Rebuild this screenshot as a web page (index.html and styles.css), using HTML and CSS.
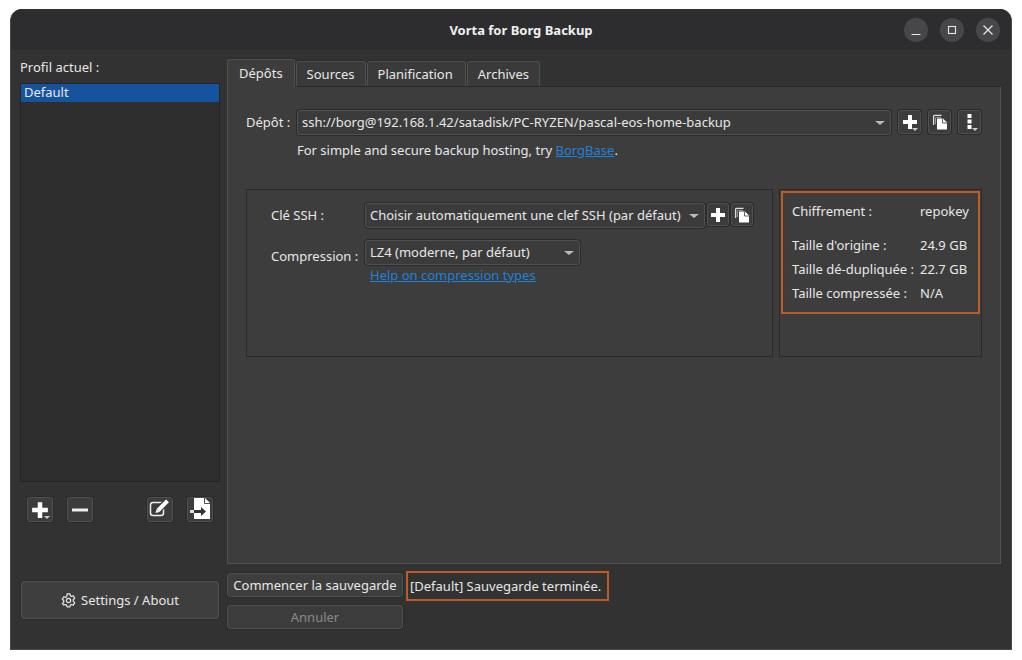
FILE: index.html
```html
<!DOCTYPE html>
<html lang="fr">
<head>
    <meta charset="UTF-8">
    <title>Vorta for Borg Backup</title>
    <link rel="stylesheet" href="styles.css">
</head>
<body>
    <svg class="defs" width="0" height="0">
        <symbol id="plus" viewBox="0 0 16 16"><path d="M6 1h4v5h5v4h-5v5H6v-5H1V6h5z" fill="#fff"/></symbol>
        <symbol id="copy" viewBox="0 0 16 16">
            <path d="M1.600 11V2.200c0-.5.300-.8.800-.8H9.500" fill="none" stroke="#ddd" stroke-width="1.300"/>
            <path d="M3.500 10V4.200c0-.5.300-.8.800-.8H9" fill="none" stroke="#999" stroke-width="1"/>
            <path d="M5 4.500h6l4 4V15.500H5z" fill="#fff"/>
            <path d="M10.500 4.500v4.500H15" fill="none" stroke="#3c3c3c" stroke-width=".8"/>
        </symbol>
    </svg>
    <div class="window">
        <div class="titlebar">
            <span class="title">Vorta for Borg Backup</span>
            <div class="win-btns">
                <span class="win-btn"><svg width="12" height="12" viewBox="0 0 12 12"><path d="M1.500 10.500h9" stroke="#e8e8e8" stroke-width="1.200"/></svg></span>
                <span class="win-btn"><svg width="12" height="12" viewBox="0 0 12 12"><rect x="2.500" y="2.500" width="7" height="7" fill="none" stroke="#e8e8e8" stroke-width="1.100"/></svg></span>
                <span class="win-btn"><svg width="12" height="12" viewBox="0 0 12 12"><path d="M1.500 1.500l9 9M10.500 1.500l-9 9" stroke="#e8e8e8" stroke-width="1.200"/></svg></span>
            </div>
        </div>
        <div class="content">
            <div class="sidebar">
                <div class="profile-label">Profil actuel :</div>
                <div class="profile-list"><div class="profile-item">Default</div></div>
                <div class="profile-tools">
                    <div class="tool-group">
                        <button class="tool menu"><svg width="18" height="18"><use href="#plus"/></svg></button>
                        <button class="tool"><svg width="16" height="16" viewBox="0 0 16 16"><path d="M0 6.500h16v3H0z" fill="#eee"/></svg></button>
                    </div>
                    <div class="tool-group">
                        <button class="tool"><svg width="24" height="23" viewBox="0 0 24 23">
                            <path d="M15.500 10.500V15c0 1.400-1 2.500-2.500 2.500H5c-1.400 0-2.500-1.100-2.500-2.500V7C2.500 5.600 3.600 4.500 5 4.500h9" fill="none" stroke="#eee" stroke-width="1.500"/>
                            <path d="M9.500 13 19 3" fill="none" stroke="#3a3a3a" stroke-width="6.500"/>
                            <path d="M10 12.500 19.500 2.800" fill="none" stroke="#fff" stroke-width="4"/>
                            <path d="M8.600 11.200 11.400 14 7.500 15z" fill="#fff"/>
                        </svg></button>
                        <button class="tool"><svg width="24" height="23" viewBox="0 0 24 23">
                            <path d="M6 0h11l5 5v16H6z" fill="#fff"/>
                            <path d="M16.500 0v5.500H22" fill="none" stroke="#3a3a3a" stroke-width=".9"/>
                            <path d="M2 12h4v3H2z" fill="#ddd"/>
                            <path d="M6 12h7V9l5 4.500L13 18v-3H6z" fill="#333"/>
                        </svg></button>
                    </div>
                </div>
                <button class="btn settings-btn">
                    <svg width="15" height="15" viewBox="0 0 16 16"><path d="M6.500 1h3l.5 2 1.100.6 2-.6 1.500 2.600-1.500 1.400v1.900l1.500 1.400-1.500 2.600-2-.6-1.100.6-.5 2h-3l-.5-2-1.100-.6-2 .6L1.400 11.300l1.500-1.400V8L1.400 6.600 2.900 4l2 .6L6 4z" fill="none" stroke="#e8e8e8" stroke-width="1.300" stroke-linejoin="round"/><circle cx="8" cy="8" r="2.300" fill="none" stroke="#e8e8e8" stroke-width="1.300"/></svg>
                    Settings / About
                </button>
            </div>
            <div class="main">
                <div class="tabs">
                    <span class="tab active">Dépôts</span>
                    <span class="tab">Sources</span>
                    <span class="tab wide">Planification</span>
                    <span class="tab">Archives</span>
                </div>
                <div class="pane">
                    <div class="repo-row">
                        <span class="repo-label">Dépôt :</span>
                        <div class="combo repo-combo">ssh://borg@192.168.1.42/satadisk/PC-RYZEN/pascal-eos-home-backup<i class="arrow"></i></div>
                        <div class="repo-tools">
                            <button class="tool small menu"><svg width="16" height="16"><use href="#plus"/></svg></button>
                            <button class="tool small"><svg width="16" height="16"><use href="#copy"/></svg></button>
                            <button class="tool small menu"><svg width="16" height="16" viewBox="0 0 16 16"><path d="M5.500 0h4v4h-4zM5.500 5.500h4v4h-4zM5.500 11h4v4h-4z" fill="#fff"/></svg></button>
                        </div>
                    </div>
                    <p class="hosting">For simple and secure backup hosting, try <a href="#">BorgBase</a>.</p>
                    <div class="boxes">
                        <div class="box options">
                            <div class="ssh-row">
                                <span class="opt-label">Clé SSH :</span>
                                <div class="combo ssh-combo">Choisir automatiquement une clef SSH (par défaut)<i class="arrow"></i></div>
                                <button class="tool tiny"><svg width="16" height="16"><use href="#plus"/></svg></button>
                                <button class="tool tiny"><svg width="16" height="16"><use href="#copy"/></svg></button>
                            </div>
                            <div class="comp-row">
                                <span class="opt-label comp-label">Compression :</span>
                                <div>
                                    <div class="combo comp-combo">LZ4 (moderne, par défaut)<i class="arrow"></i></div>
                                    <a class="comp-help" href="#">Help on compression types</a>
                                </div>
                            </div>
                        </div>
                        <div class="box stats-box">
                            <div class="stats">
                                <div class="stat first"><span>Chiffrement :</span><span>repokey</span></div>
                                <div class="stat"><span>Taille d'origine :</span><span>24.9 GB</span></div>
                                <div class="stat"><span>Taille dé-dupliquée :</span><span>22.7 GB</span></div>
                                <div class="stat"><span>Taille compressée :</span><span>N/A</span></div>
                            </div>
                        </div>
                    </div>
                </div>
                <div class="actions">
                    <div class="action-btns">
                        <button class="btn">Commencer la sauvegarde</button>
                        <button class="btn disabled">Annuler</button>
                    </div>
                    <div class="status">[Default] Sauvegarde terminée.</div>
                </div>
            </div>
        </div>
    </div>
</body>
</html>
```

FILE: styles.css
```css
* {
    box-sizing: border-box;
}
body {
    margin: 0;
    padding: 9px 10px 10px;
    background: #fff;
    font-family: "Noto Sans", sans-serif;
    font-size: 13px;
    color: #e8e8e8;
    overflow: hidden;
}
.defs {
    display: block;
    height: 0;
}
button {
    font-family: inherit;
    font-size: 13px;
    color: #e8e8e8;
}
a {
    color: #1d82d8;
}
.window {
    width: 1002px;
    height: 641px;
    background: #323232;
    border-radius: 12px 12px 0 0;
    border: 1px solid #4a4a4a;
    border-top: 0;
    overflow: hidden;
}
.titlebar {
    height: 41px;
    background: #2d2d30;
    position: relative;
    display: flex;
    align-items: center;
    justify-content: center;
    padding-left: 20px;
}
.title {
    font-weight: 700;
    color: #f0f0f0;
}
.win-btns {
    position: absolute;
    right: 11px;
    top: 9px;
    display: flex;
    gap: 12px;
}
.win-btn {
    width: 24px;
    height: 24px;
    border-radius: 50%;
    background: #47474a;
    display: flex;
    align-items: center;
    justify-content: center;
}
.content {
    display: flex;
    padding: 9px 10px 0 9px;
    gap: 7px;
}
.sidebar {
    width: 200px;
    flex-shrink: 0;
}
.profile-label {
    height: 24px;
    line-height: 17px;
}
.profile-list {
    height: 399px;
    background: #2e2e2e;
    border: 1px solid #242424;
}
.profile-item {
    height: 18px;
    line-height: 17px;
    background: #15539e;
    padding-left: 3px;
}
.profile-tools {
    display: flex;
    justify-content: space-between;
    padding: 15px 7px 0 7px;
}
.tool-group {
    display: flex;
    gap: 14px;
}
.tool {
    width: 26px;
    height: 25px;
    padding: 0;
    position: relative;
    display: flex;
    align-items: center;
    justify-content: center;
    background: #3c3c3c;
    border: 1px solid #505050;
    border-radius: 3px;
    box-shadow: 0 0 0 1px #2b2b2b;
}
.tool.menu::after {
    content: "";
    position: absolute;
    right: 2px;
    bottom: 2px;
    border: 3px solid transparent;
    border-top: 3px solid #ccc;
    border-bottom: 0;
}
.tool.small {
    width: 23px;
    height: 24px;
}
.tool.tiny {
    width: 22px;
    height: 23px;
}
.settings-btn {
    display: flex;
    align-items: center;
    justify-content: center;
    gap: 5px;
    margin: 59px 0 0 1px;
}
.main {
    width: 774px;
}
.tabs {
    display: flex;
    height: 27px;
    align-items: flex-end;
}
.tab {
    height: 25px;
    line-height: 24px;
    padding: 0 10px;
    margin-right: 1px;
    background: #3a3a3a;
    border: 1px solid #505050;
    border-bottom: 0;
    border-radius: 3px 3px 0 0;
    box-shadow: 0 -1px 0 #2b2b2b;
}
.tab.wide {
    padding-right: 12px;
}
.tab.active {
    height: 28px;
    line-height: 26px;
    padding: 0 11px;
    margin-bottom: -1px;
    position: relative;
    z-index: 1;
    background: #3d3d3d;
}
.pane {
    height: 478px;
    background: #3d3d3d;
    border: 1px solid #505050;
    border-top-color: #2a2a2a;
    padding: 23px 18px 0 18px;
}
.repo-row {
    display: flex;
    align-items: flex-start;
    height: 25px;
}
.repo-label {
    width: 51px;
    line-height: 25px;
}
.combo {
    position: relative;
    height: 25px;
    line-height: 23px;
    padding-left: 4px;
    background: #3b3b3b;
    border: 1px solid #505050;
    border-radius: 3px;
    box-shadow: 0 0 0 1px #2b2b2b;
    white-space: nowrap;
}
.arrow {
    position: absolute;
    right: 5px;
    top: 10px;
    border: 5px solid transparent;
    border-top: 4px solid #bbb;
    border-bottom: 0;
}
.repo-combo {
    width: 594px;
}
.repo-tools {
    display: flex;
    gap: 7px;
    margin-left: 7px;
}
.hosting {
    margin: 6px 0 0 51px;
    line-height: 18px;
}
.boxes {
    display: flex;
    gap: 6px;
    margin-top: 30px;
}
.box {
    height: 168px;
    border: 1px solid #2a2a2a;
    flex-shrink: 0;
}
.options {
    width: 527px;
    padding: 13px 0 0 24px;
}
.ssh-row {
    display: flex;
    align-items: flex-start;
    gap: 2px;
}
.opt-label {
    width: 90px;
    margin-right: 2px;
    flex-shrink: 0;
    line-height: 25px;
}
.ssh-combo {
    width: 340px;
    flex-shrink: 0;
}
.comp-row {
    display: flex;
    margin-top: 12px;
}
.comp-row .opt-label {
    width: 92px;
    padding-top: 4px;
}
.comp-combo {
    width: 215px;
}
.comp-help {
    display: block;
    margin: 1px 0 0 5px;
    line-height: 18px;
}
.stats-box {
    width: 203px;
    padding: 1px;
}
.stats {
    height: 123px;
    border: 2px solid #bd5b25;
    padding: 9px 0 0 9px;
}
.stat {
    display: flex;
    height: 24px;
    line-height: 18px;
}
.stat span:first-child {
    width: 128px;
    flex-shrink: 0;
    white-space: nowrap;
}
.stat.first {
    height: 34px;
}
.actions {
    display: flex;
    gap: 3px;
    padding-top: 9px;
}
.action-btns {
    display: flex;
    flex-direction: column;
    gap: 8px;
}
.btn {
    width: 176px;
    height: 24px;
    padding: 0;
    background: #3e3e3e;
    border: 1px solid #505050;
    border-radius: 3px;
    box-shadow: 0 0 0 1px #2b2b2b;
}
.btn.settings-btn {
    width: 198px;
    height: 38px;
}
.btn.disabled {
    color: #8a8a8a;
    background: #3c3c3c;
}
.status {
    height: 30px;
    margin-top: -2px;
    width: 203px;
    border: 2px solid #bd5b25;
    line-height: 26px;
    padding-left: 2px;
    white-space: nowrap;
}
```
